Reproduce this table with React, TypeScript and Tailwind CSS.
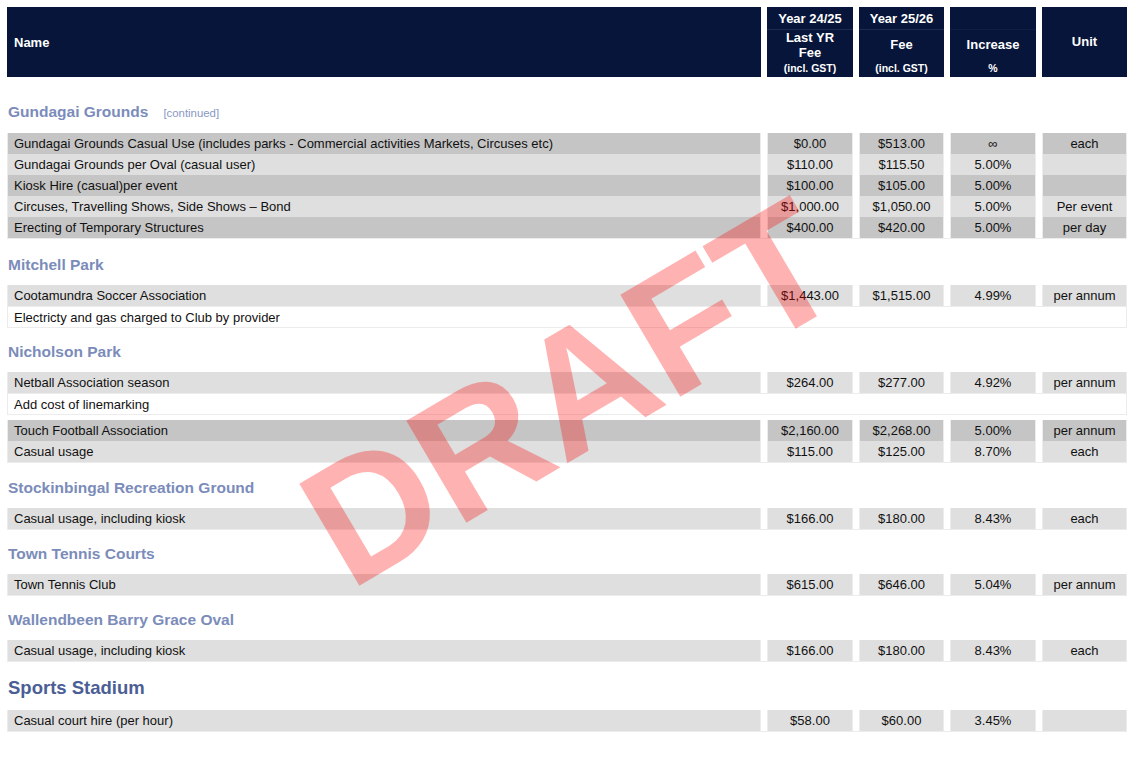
import React from "react";

type Row = {
  name: string;
  a?: string;
  b?: string;
  c?: string;
  d?: string;
  tone: "dark" | "light" | "span";
};

function Cell({ children, tone, left }: { children?: React.ReactNode; tone: "dark" | "light"; left?: boolean }) {
  const bg = tone === "dark" ? "bg-[#c5c5c5]" : "bg-[#dfdfdf]";
  return (
    <div
      className={`${bg} h-[21px] border-x border-[#ececec] flex items-center text-[13px] leading-[21px] text-[#111] whitespace-nowrap ${
        left ? "pl-[6px]" : "justify-center"
      }`}
    >
      {children}
    </div>
  );
}

function Table({ rows }: { rows: Row[] }) {
  return (
    <div className="grid grid-cols-[754px_86px_85px_86px_85px] gap-x-[6px] border-b border-[#ececec]">
      {rows.map((r, i) =>
        r.tone === "span" ? (
          <div
            key={i}
            className="col-span-5 h-[21px] bg-white border-x border-t border-[#ececec] flex items-center pl-[6px] text-[13px] leading-[21px] text-[#111]"
          >
            {r.name}
          </div>
        ) : (
          <React.Fragment key={i}>
            <Cell tone={r.tone} left>
              {r.name}
            </Cell>
            <Cell tone={r.tone}>{r.a}</Cell>
            <Cell tone={r.tone}>{r.b}</Cell>
            <Cell tone={r.tone}>{r.c}</Cell>
            <Cell tone={r.tone}>{r.d}</Cell>
          </React.Fragment>
        )
      )}
    </div>
  );
}

function Title({ block, children, big, extra }: { block: string; children: React.ReactNode; big?: boolean; extra?: string }) {
  return (
    <div className={`${block} flex items-end pb-[10px] pl-[1px]`}>
      {big ? (
        <span className="text-[18.5px] leading-[24px] font-bold text-[#4b5e95]">{children}</span>
      ) : (
        <span className="text-[15.5px] leading-[20px] font-bold text-[#7b8cba]">
          {children}
          {extra && <span className="ml-[15px] text-[11.4px] font-normal text-[#8898c4]">{extra}</span>}
        </span>
      )}
    </div>
  );
}

export default function App() {
  return (
    <div
      className="relative w-[1134px] h-[782px] overflow-hidden bg-white pt-[7px] px-[7px]"
      style={{ fontFamily: '"Liberation Sans", Arial, sans-serif' }}
    >
      {/* Header */}
      <div className="grid grid-cols-[754px_86px_85px_86px_85px] gap-x-[6px] h-[70px] text-white font-bold">
        <div className="bg-[#061539] flex items-center pl-[7px] pt-[1px] text-[13px]">Name</div>
        <div className="bg-[#061539] flex flex-col text-center">
          <div className="h-[22px] flex items-center justify-center pt-[2px] text-[13px]">Year 24/25</div>
          <div className="flex-1 border-t border-[#1c2a52] flex flex-col items-center">
            <div className="text-[13px] leading-[15px]">Last YR</div>
            <div className="text-[13px] leading-[15px]">Fee</div>
            <div className="mt-[2px] text-[10.5px] leading-[12px]">(incl. GST)</div>
          </div>
        </div>
        <div className="bg-[#061539] flex flex-col text-center">
          <div className="h-[22px] flex items-center justify-center pt-[2px] text-[13px]">Year 25/26</div>
          <div className="flex-1 border-t border-[#1c2a52] flex flex-col items-center pt-[7px]">
            <div className="text-[13px] leading-[15px]">Fee</div>
            <div className="mt-[10px] text-[10.5px] leading-[12px]">(incl. GST)</div>
          </div>
        </div>
        <div className="bg-[#061539] flex flex-col text-center">
          <div className="h-[22px]" />
          <div className="flex-1 border-t border-[#0f1e45] flex flex-col items-center pt-[7px]">
            <div className="text-[13px] leading-[15px]">Increase</div>
            <div className="mt-[10px] text-[10.5px] leading-[12px]">%</div>
          </div>
        </div>
        <div className="bg-[#061539] flex items-center justify-center text-[13px]">Unit</div>
      </div>

      <Title block="h-[56px]" extra="[continued]">
        Gundagai Grounds
      </Title>
      <Table
        rows={[
          {
            name: "Gundagai Grounds Casual Use (includes parks - Commercial activities Markets, Circuses etc)",
            a: "$0.00",
            b: "$513.00",
            c: "∞",
            d: "each",
            tone: "dark",
          },
          { name: "Gundagai Grounds per Oval (casual user)", a: "$110.00", b: "$115.50", c: "5.00%", d: "", tone: "light" },
          { name: "Kiosk Hire (casual)per event", a: "$100.00", b: "$105.00", c: "5.00%", d: "", tone: "dark" },
          {
            name: "Circuses, Travelling Shows, Side Shows – Bond",
            a: "$1,000.00",
            b: "$1,050.00",
            c: "5.00%",
            d: "Per event",
            tone: "light",
          },
          { name: "Erecting of Temporary Structures", a: "$400.00", b: "$420.00", c: "5.00%", d: "per day", tone: "dark" },
        ]}
      />

      <Title block="h-[46px]">Mitchell Park</Title>
      <Table
        rows={[
          { name: "Cootamundra Soccer Association", a: "$1,443.00", b: "$1,515.00", c: "4.99%", d: "per annum", tone: "light" },
          { name: "Electricty and gas charged to Club by provider", tone: "span" },
        ]}
      />

      <Title block="h-[44px]">Nicholson Park</Title>
      <Table
        rows={[
          { name: "Netball Association season", a: "$264.00", b: "$277.00", c: "4.92%", d: "per annum", tone: "light" },
          { name: "Add cost of linemarking", tone: "span" },
        ]}
      />
      <div className="h-[5px]" />
      <Table
        rows={[
          { name: "Touch Football Association", a: "$2,160.00", b: "$2,268.00", c: "5.00%", d: "per annum", tone: "dark" },
          { name: "Casual usage", a: "$115.00", b: "$125.00", c: "8.70%", d: "each", tone: "light" },
        ]}
      />

      <Title block="h-[45px]">Stockinbingal Recreation Ground</Title>
      <Table
        rows={[{ name: "Casual usage, including kiosk", a: "$166.00", b: "$180.00", c: "8.43%", d: "each", tone: "light" }]}
      />

      <Title block="h-[44px]">Town Tennis Courts</Title>
      <Table rows={[{ name: "Town Tennis Club", a: "$615.00", b: "$646.00", c: "5.04%", d: "per annum", tone: "light" }]} />

      <Title block="h-[44px]">Wallendbeen Barry Grace Oval</Title>
      <Table
        rows={[{ name: "Casual usage, including kiosk", a: "$166.00", b: "$180.00", c: "8.43%", d: "each", tone: "light" }]}
      />

      <Title block="h-[48px]" big>
        Sports Stadium
      </Title>
      <Table rows={[{ name: "Casual court hire (per hour)", a: "$58.00", b: "$60.00", c: "3.45%", d: "", tone: "light" }]} />

      {/* DRAFT watermark */}
      <div className="pointer-events-none absolute left-[570px] top-[392px] -translate-x-1/2 -translate-y-1/2 rotate-[-30.5deg] whitespace-nowrap text-[172px] leading-none font-bold text-[#ff00004d]">
        DRAFT
      </div>
    </div>
  );
}
